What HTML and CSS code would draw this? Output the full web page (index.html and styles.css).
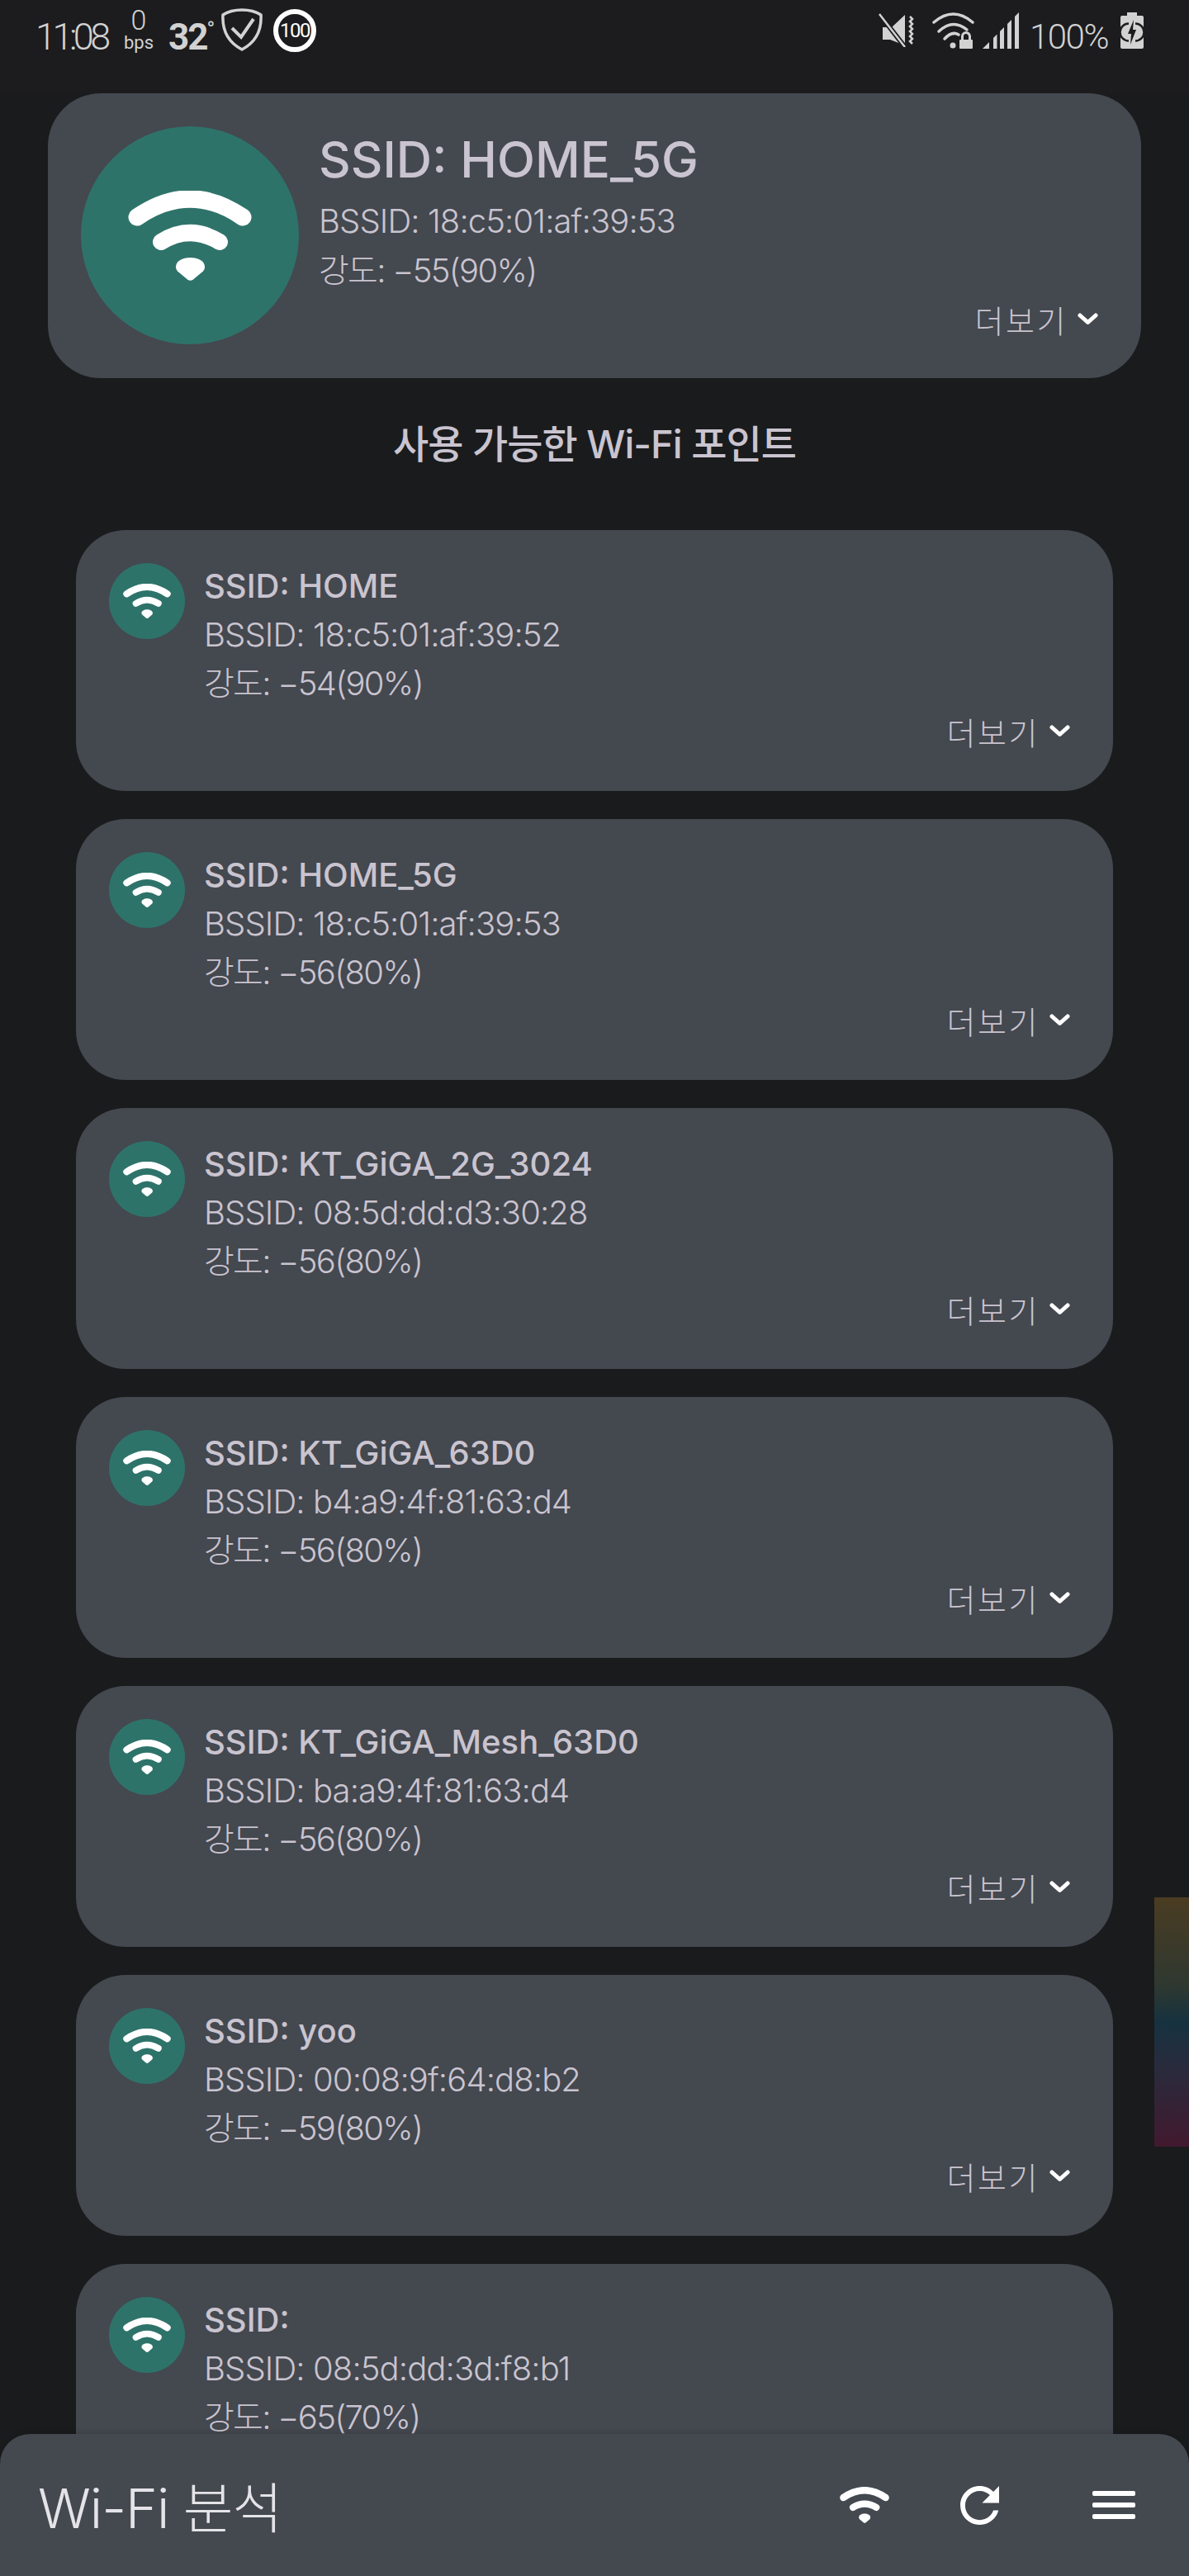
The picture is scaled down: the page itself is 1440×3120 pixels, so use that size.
FILE: index.html
```html
<!DOCTYPE html>
<html lang="ko">
<head>
<meta charset="UTF-8" />
<meta name="viewport" content="width=device-width,initial-scale=1" />
<title>Wi-Fi 분석</title>
<link rel="stylesheet" href="styles.css">
</head>
<body>

<svg class="defs" width="0" height="0">
  <symbol id="wifi" viewBox="0 0 150 109">
    <path d="M11 32Q75 -12 139 32" fill="none" stroke="currentColor" stroke-width="21" stroke-linecap="round"/>
    <path d="M40 62Q75 40 111 62" fill="none" stroke="currentColor" stroke-width="20" stroke-linecap="round"/>
    <path d="M75.500 81C85 81 93 85 93 92.500c0 2-1 3.500-2 5L79 107.500q-3.500 2.500-7 0L60 97.500c-1-1.500-2-3-2-5C58 85 66 81 75.500 81z" fill="currentColor"/>
  </symbol>
  <symbol id="chev" viewBox="0 0 25 16">
    <path d="M3 3L12.500 11.500 22 3" fill="none" stroke="currentColor" stroke-width="5" stroke-linecap="round" stroke-linejoin="round"/>
  </symbol>
</svg>

<!-- STATUS BAR -->
<div class="status">
  <span class="time">11:08</span>
  <span class="speed"><b>0</b><i>bps</i></span>
  <span class="temp">32<sup>°</sup></span>
  <svg class="shield" viewBox="0 0 50 52">
    <path d="M25 2C33 2 42 4 48 8 49 26 42 41 25 50 8 41 1 26 2 8 8 4 17 2 25 2z" fill="none" stroke="#d2d2d2" stroke-width="3.500" stroke-linejoin="round"/>
    <path d="M13 24L24 35 39 13" fill="none" stroke="#d2d2d2" stroke-width="4"/>
  </svg>
  <span class="ring">100</span>
  <span class="spacer"></span>
  <svg class="mute" viewBox="0 0 45 42">
    <path d="M33 3L17 18H6V33H15L33 40z" fill="#d2d2d2"/>
    <path d="M2 2L33 42" stroke="#1c1c1e" stroke-width="6"/>
    <path d="M2 2L33 42" stroke="#d2d2d2" stroke-width="2.500"/>
    <path d="M39 5l3 3-3 3 3 3-3 3 3 3-3 3 3 3-3 3 3 3-3 3 3 3" fill="none" stroke="#d2d2d2" stroke-width="2.500"/>
  </svg>
  <svg class="wifilock" viewBox="0 0 51 44">
    <g fill="none" stroke="#d2d2d2" stroke-width="3.500" stroke-linecap="round">
      <path d="M2 12Q25.500 -8 49 12"/>
      <path d="M8 23Q25 7 42 21"/>
      <path d="M15 32Q24 22 32 27"/>
    </g>
    <circle cx="25" cy="40" r="3.500" fill="#d2d2d2"/>
    <rect x="33" y="33" width="16" height="11" rx="1" fill="#d2d2d2"/>
    <path d="M36.500 33v-4a4.500 4.500 0 0 1 9 0v4" fill="none" stroke="#d2d2d2" stroke-width="3"/>
  </svg>
  <svg class="signal" viewBox="0 0 44 44" fill="#d2d2d2">
    <polygon points="0,44 8,36 8,44"/>
    <polygon points="13,44 13,31 17.500,26.500 17.500,44"/>
    <polygon points="21,44 21,23 26,18 26,44"/>
    <polygon points="30,44 30,14 35,9 35,44"/>
    <polygon points="39,44 39,5 44,0 44,44"/>
  </svg>
  <span class="pct">100%</span>
  <svg class="batt" viewBox="0 0 28 44">
    <rect x="8" y="0" width="12" height="6" fill="#d2d2d2"/>
    <rect x="0" y="4" width="28" height="40" rx="2" fill="#d2d2d2"/>
    <path d="M10 13.500A10 10 0 0 0 10 34.500M18 13.500A10 10 0 0 1 18 34.500" fill="none" stroke="#1c1c1e" stroke-width="2.500"/>
    <path d="M16 9L9 26H13L12 39 19 21H15z" fill="#1c1c1e"/>
  </svg>
</div>

<!-- CURRENT NETWORK -->
<div class="hero">
  <div class="hero-icon"><svg class="hero-wifi"><use href="#wifi"/></svg></div>
  <div class="hero-info">
    <div class="hero-ssid">SSID: HOME_5G</div>
    <div class="row">BSSID: 18:c5:01:af:39:53</div>
    <div class="row level">강도: −55(90%)</div>
    <div class="more">더보기 <svg class="chev"><use href="#chev"/></svg></div>
  </div>
</div>

<h2 class="heading">사용 가능한 Wi-Fi 포인트</h2>

<!-- LIST -->
<div class="list">
  <div class="card">
    <div class="card-top">
      <div class="card-icon"><svg class="card-wifi"><use href="#wifi"/></svg></div>
      <div class="card-info">
        <div class="ssid">SSID: HOME</div>
        <div class="row">BSSID: 18:c5:01:af:39:52</div>
        <div class="row level">강도: −54(90%)</div>
      </div>
    </div>
    <div class="more">더보기 <svg class="chev"><use href="#chev"/></svg></div>
  </div>
  <div class="card">
    <div class="card-top">
      <div class="card-icon"><svg class="card-wifi"><use href="#wifi"/></svg></div>
      <div class="card-info">
        <div class="ssid">SSID: HOME_5G</div>
        <div class="row">BSSID: 18:c5:01:af:39:53</div>
        <div class="row level">강도: −56(80%)</div>
      </div>
    </div>
    <div class="more">더보기 <svg class="chev"><use href="#chev"/></svg></div>
  </div>
  <div class="card">
    <div class="card-top">
      <div class="card-icon"><svg class="card-wifi"><use href="#wifi"/></svg></div>
      <div class="card-info">
        <div class="ssid">SSID: KT_GiGA_2G_3024</div>
        <div class="row">BSSID: 08:5d:dd:d3:30:28</div>
        <div class="row level">강도: −56(80%)</div>
      </div>
    </div>
    <div class="more">더보기 <svg class="chev"><use href="#chev"/></svg></div>
  </div>
  <div class="card">
    <div class="card-top">
      <div class="card-icon"><svg class="card-wifi"><use href="#wifi"/></svg></div>
      <div class="card-info">
        <div class="ssid">SSID: KT_GiGA_63D0</div>
        <div class="row">BSSID: b4:a9:4f:81:63:d4</div>
        <div class="row level">강도: −56(80%)</div>
      </div>
    </div>
    <div class="more">더보기 <svg class="chev"><use href="#chev"/></svg></div>
  </div>
  <div class="card">
    <div class="card-top">
      <div class="card-icon"><svg class="card-wifi"><use href="#wifi"/></svg></div>
      <div class="card-info">
        <div class="ssid">SSID: KT_GiGA_Mesh_63D0</div>
        <div class="row">BSSID: ba:a9:4f:81:63:d4</div>
        <div class="row level">강도: −56(80%)</div>
      </div>
    </div>
    <div class="more">더보기 <svg class="chev"><use href="#chev"/></svg></div>
  </div>
  <div class="card">
    <div class="card-top">
      <div class="card-icon"><svg class="card-wifi"><use href="#wifi"/></svg></div>
      <div class="card-info">
        <div class="ssid">SSID: yoo</div>
        <div class="row">BSSID: 00:08:9f:64:d8:b2</div>
        <div class="row level">강도: −59(80%)</div>
      </div>
    </div>
    <div class="more">더보기 <svg class="chev"><use href="#chev"/></svg></div>
  </div>
  <div class="card">
    <div class="card-top">
      <div class="card-icon"><svg class="card-wifi"><use href="#wifi"/></svg></div>
      <div class="card-info">
        <div class="ssid">SSID:</div>
        <div class="row">BSSID: 08:5d:dd:3d:f8:b1</div>
        <div class="row level">강도: −65(70%)</div>
      </div>
    </div>
  </div>
</div>

<div class="edge-glow"></div>

<!-- BOTTOM BAR -->
<div class="bottom">
  <span class="app-title">Wi-Fi 분석</span>
  <svg class="b-wifi"><use href="#wifi"/></svg>
  <svg class="b-refresh" viewBox="4 4 16 16"><path fill="currentColor" d="M17.650 6.350C16.200 4.900 14.210 4 12 4c-4.420 0-7.990 3.580-7.990 8s3.570 8 7.990 8c3.730 0 6.840-2.550 7.730-6h-2.080c-.82 2.330-3.040 4-5.650 4-3.310 0-6-2.690-6-6s2.690-6 6-6c1.660 0 3.140.69 4.220 1.780L13 11h7V4l-2.350 2.350z"/></svg>
  <div class="b-menu"><span></span><span></span><span></span></div>
</div>

</body>
</html>
```

FILE: styles.css
```css
:root{
  --bg:#1a1b1d; --card:#44484f; --teal:#2e736a; --text:#c9c4cf; --icon:#d2d2d2;
}
*{box-sizing:border-box;margin:0;padding:0}
html,body{height:3120px;overflow:hidden}
body{
  background:var(--bg);
  color:var(--text);
  font-family:Inter,"Noto Sans CJK KR",sans-serif;
  position:relative;
}
.defs{position:absolute}

/* status bar */
.status{
  height:113px;
  background:#1c1c1e;
  display:flex;
  align-items:flex-start;
  padding:10px 55px 0 43px;
  color:var(--icon);
  font-family:Roboto,sans-serif;
}
.time{font-size:45px;font-weight:300;line-height:52px;margin-top:9px;letter-spacing:-4.5px;width:107px}
.speed{display:flex;flex-direction:column;align-items:center;width:36px}
.speed b{font-weight:300;font-size:34px;line-height:28px}
.speed i{font-style:normal;font-size:22px;line-height:22px;margin-top:3px}
.temp{font-size:44px;font-weight:700;line-height:52px;margin:9px 0 0 18px;letter-spacing:-2px;width:64px}
.temp sup{font-size:26px;font-weight:400;line-height:0;vertical-align:16px}
.shield{width:50px;height:52px}
.ring{
  width:52px;height:52px;margin:1px 0 0 13px;
  border:6px solid #fff;border-radius:50%;
  color:#fff;font-size:24px;line-height:40px;text-align:center;letter-spacing:-1.5px;
}
.spacer{flex:1}
.mute{width:45px;height:42px;margin-top:5px}
.wifilock{width:51px;height:44px;margin:5px 0 0 21px}
.signal{width:44px;height:44px;margin:5px 0 0 10px}
.pct{font-size:42px;font-weight:300;line-height:52px;margin:9px 0 0 13px;letter-spacing:-1.5px;width:97px}
.batt{width:28px;height:44px;margin:5px 0 0 13px}

/* current network */
.hero{
  margin:0 58px;
  height:345px;
  background:var(--card);
  border-radius:64px;
  display:flex;
  gap:24px;
  padding:40px 52px 40px 40px;
}
.hero-icon{
  width:264px;height:264px;flex:none;
  background:var(--teal);border-radius:50%;
  display:flex;align-items:center;justify-content:center;
  color:#fff;
}
.hero-wifi{width:150px;height:109px}
.hero-info{flex:1}
.hero-ssid{font-size:60px;font-weight:500;line-height:80px;letter-spacing:0;margin-bottom:5px}
.row{font-size:40px;font-weight:300;line-height:60px;letter-spacing:-.9px;white-space:nowrap}
.row.level{letter-spacing:-1.7px}
.more{
  height:60px;
  margin-top:-2px;
  display:flex;align-items:center;justify-content:flex-end;gap:12px;
  font-size:38px;font-weight:300;letter-spacing:2.5px;
}
.chev{width:25px;height:16px;color:#fff;margin-top:2px}

.heading{
  height:184px;
  padding-top:40px;
  text-align:center;
  font-size:47px;font-weight:500;line-height:80px;letter-spacing:-1px;
}

/* list */
.list{display:flex;flex-direction:column;gap:34px;padding:0 92px}
.card{
  height:316px;flex:none;
  background:var(--card);
  border-radius:60px;
  padding:38px 52px 41px 40px;
}
.card-top{display:flex;gap:23px}
.card-icon{
  width:92px;height:92px;margin-top:2px;flex:none;
  background:var(--teal);border-radius:50%;
  display:flex;align-items:center;justify-content:center;
  color:#fff;
}
.card-wifi{width:58px;height:42px}
.ssid{font-size:40px;font-weight:500;line-height:59px;letter-spacing:0}
.card .row{line-height:59px}

.edge-glow{
  position:absolute;left:1398px;top:2298px;width:42px;height:302px;
  background:linear-gradient(#4a3c22,#2f3830 35%,#16323f 50%,#2a2a3c 70%,#42192e);
}

/* bottom bar */
.bottom{
  position:absolute;left:0;right:0;bottom:0;
  height:172px;
  background:var(--card);
  border-radius:36px 36px 0 0;
  box-shadow:0 -2px 6px rgba(0,0,0,.12);
  display:flex;
  align-items:center;
  padding:0 65px 0 46px;
  color:#fff;
}
.app-title{flex:1;font-size:66px;font-weight:300;color:#e4e4e8;letter-spacing:-1px;margin-top:-2px}
.b-wifi{width:60px;height:44px}
.b-refresh{width:47px;height:47px;margin-left:86px}
.b-menu{width:52px;margin-left:113px;display:flex;flex-direction:column;gap:8px}
.b-menu span{height:6px;background:#fff;border-radius:2px}
```
